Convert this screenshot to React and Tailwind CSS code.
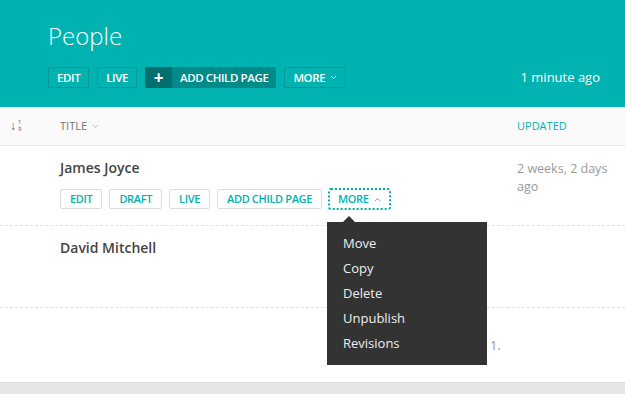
import React from "react";

const Chevron = ({ up, className }) => (
  <svg viewBox="0 0 10 6" className={className} fill="none" stroke="currentColor" strokeWidth="1.2">
    {up ? <path d="M1.5 5 L5 1.5 L8.5 5" /> : <path d="M1.5 1 L5 4.5 L8.5 1" />}
  </svg>
);

const HeadBtn = ({ children }) => (
  <button className="h-[21px] px-[8px] border border-[#009b98] rounded-[2px] text-[11.5px] tracking-[-0.4px] font-semibold text-white flex items-center gap-[5px]">
    {children}
  </button>
);

const RowBtn = ({ children, focus }) => (
  <button
    className={
      "h-[20px] px-[9px] bg-white text-[11px] tracking-[-0.35px] font-semibold text-[#00b3b0] flex items-center gap-[5px] rounded-[2px] " +
      (focus ? "outline-2 outline-dotted outline-[#00b3b0] -outline-offset-1" : "border border-[#dcdcdc]")
    }
  >
    {children}
  </button>
);

export default function App() {
  return (
    <div className="relative w-[625px] h-[394px] overflow-hidden bg-white font-['Open_Sans',sans-serif]">
      <header className="h-[107px] bg-[#00b3b0] pl-12 pr-[25px] pt-[20px]">
        <h1 className="text-[24px] leading-[32px] font-light text-white">People</h1>
        <div className="mt-[15px] flex items-center justify-between">
          <div className="flex items-center gap-[8px]">
            <HeadBtn>EDIT</HeadBtn>
            <HeadBtn>LIVE</HeadBtn>
            <button className="h-[21px] flex items-stretch rounded-[2px] overflow-hidden bg-[#008a88] text-white text-[11.5px] tracking-[-0.4px] font-semibold">
              <span className="w-[27px] bg-[#006f6e] flex items-center justify-center text-[17px] font-bold leading-none">+</span>
              <span className="px-[8px] flex items-center">ADD CHILD PAGE</span>
            </button>
            <HeadBtn>
              MORE <Chevron className="w-[7px] h-[5px]" />
            </HeadBtn>
          </div>
          <span className="text-[13px] text-white">1 minute ago</span>
        </div>
      </header>

      <div className="h-[39px] bg-[#fafafa] border-b border-[#e6e6e6] flex items-center text-[11px]">
        <div className="w-[60px] pl-[10px] flex items-center gap-[2px] text-[#555]">
          <span className="text-[12px] leading-none font-bold">↓</span>
          <span className="flex flex-col text-[6px] leading-[7px]">
            <span>1</span>
            <span>9</span>
          </span>
        </div>
        <div className="flex-1 flex items-center gap-[5px] text-[#777]">
          TITLE <Chevron className="w-[7px] h-[5px] text-[#aaa]" />
        </div>
        <div className="w-[108px] text-[#00b3b0]">UPDATED</div>
      </div>

      <div className="h-[80px] border-b border-dashed border-[#e0e0e0] flex">
        <div className="w-[60px]" />
        <div className="flex-1 pt-[12px]">
          <div className="text-[14px] font-semibold text-[#444] leading-[20px]">James Joyce</div>
          <div className="mt-[11px] flex items-center gap-[7px]">
            <RowBtn>EDIT</RowBtn>
            <RowBtn>DRAFT</RowBtn>
            <RowBtn>LIVE</RowBtn>
            <RowBtn>ADD CHILD PAGE</RowBtn>
            <RowBtn focus>
              MORE <Chevron up className="w-[7px] h-[5px]" />
            </RowBtn>
          </div>
        </div>
        <div className="w-[108px] pt-[14px] text-[12.5px] leading-[18px] text-[#999] pr-[10px]">
          2 weeks, 2 days ago
        </div>
      </div>

      <div className="h-[82px] border-b border-dashed border-[#e0e0e0] flex">
        <div className="w-[60px]" />
        <div className="flex-1 pt-[12px] text-[14px] font-semibold text-[#444] leading-[20px]">David Mitchell</div>
      </div>

      <div className="h-[74px] flex items-center pl-[490px] text-[13px] text-[#999] pt-[1px]">1.</div>
      <div className="h-[12px] bg-[#e6e6e6] border-t border-[#dcdcdc]" />

      <div className="absolute left-[327px] top-[222px] w-[160px] h-[143px] bg-[#333] pt-[9px] px-4 text-[13px] text-[#eee]">
        <div className="absolute -top-[6px] left-[16px] w-0 h-0 border-l-[6px] border-r-[6px] border-b-[6px] border-l-transparent border-r-transparent border-b-[#333]" />
        {["Move", "Copy", "Delete", "Unpublish", "Revisions"].map((t) => (
          <div key={t} className="h-[25px] leading-[25px]">
            {t}
          </div>
        ))}
      </div>
    </div>
  );
}
